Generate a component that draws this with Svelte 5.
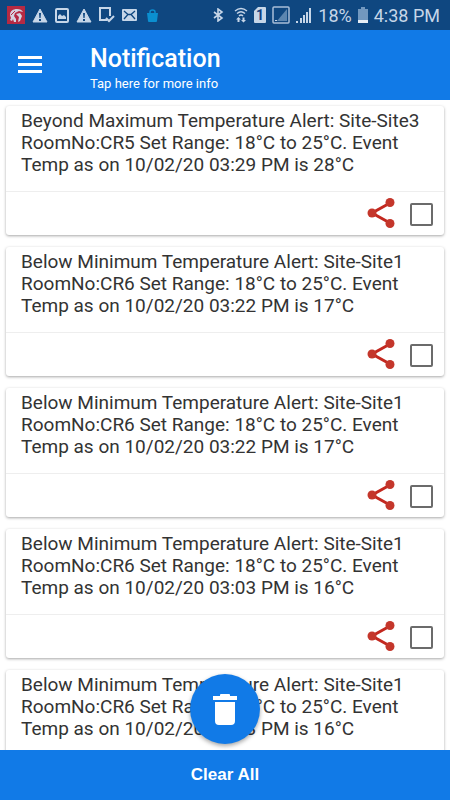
<script>
  let alerts = $state([
    { kind: "Beyond Maximum", site: "Site3", room: "CR5", time: "03:29", temp: 28, checked: false },
    { kind: "Below Minimum", site: "Site1", room: "CR6", time: "03:22", temp: 17, checked: false },
    { kind: "Below Minimum", site: "Site1", room: "CR6", time: "03:22", temp: 17, checked: false },
    { kind: "Below Minimum", site: "Site1", room: "CR6", time: "03:03", temp: 16, checked: false },
    { kind: "Below Minimum", site: "Site1", room: "CR6", time: "03:03", temp: 16, checked: false },
  ]);

  function clearAll() {
    alerts = [];
  }

  function deleteSelected() {
    alerts = alerts.filter((a) => !a.checked);
  }
</script>

{#snippet warning()}
  <svg width="16" height="15" viewBox="0 0 16 15">
    <path fill="#c6d6e8" stroke="#c6d6e8" stroke-linejoin="round" d="M8 1 15 14H1z" />
    <path fill="#0f4780" d="M7 5h2l-.4 5H7.400zM7 11h2v2H7z" />
  </svg>
{/snippet}

<div class="screen">
  <div class="status">
    <div class="tray">
      <svg width="18" height="18" viewBox="0 0 18 18">
        <path fill="#b52a43" d="M0 0h18v18H0z" />
        <path fill="#d5d3df" d="M3 9c0-4 3-6 7-6 3 0 5 1 6 3l-4-1-4 2-1 3 2 3v3H7l-1-3-1 2-2-1 1-2z" />
        <path fill="#d5d3df" d="M9 8l4-1 2 3-2 5-2 1 1-5z" />
        <path fill="none" stroke="#b52a43" d="M4 9l4-4" />
      </svg>
      {@render warning()}
      <svg width="14" height="15" viewBox="0 0 14 15">
        <rect x="1" y="1" width="12" height="13" rx="1" fill="none" stroke="#c6d6e8" stroke-width="2" />
        <path fill="#c6d6e8" d="M3 11V8l2-2 2 2 2-1 2 2v2z" />
      </svg>
      {@render warning()}
      <svg width="16" height="16" viewBox="0 0 16 16">
        <path fill="none" stroke="#c6d6e8" stroke-width="2" d="M11 9V1H1v12h7" />
        <path fill="none" stroke="#c6d6e8" stroke-width="2" d="M7 11l3 3 5-5" />
      </svg>
      <svg width="15" height="12" viewBox="0 0 15 12">
        <rect width="15" height="12" rx="1" fill="#c6d6e8" />
        <path fill="none" stroke="#0f4780" stroke-width="1.300" d="M2 2l4 3.500h3L13 2M2 10l3.500-4M13 10L9.500 6" />
      </svg>
      <svg class="bag" width="11" height="13" viewBox="0 0 11 13">
        <path fill="#0b8fd0" d="M0 4h11l-1 8q0 1-1 1H2q-1 0-1-1z" />
        <path fill="none" stroke="#0b8fd0" stroke-width="1.500" d="M3 5V3q0-2 2.500-2T8 3v2" />
      </svg>
    </div>
    <div class="system">
      <svg width="11" height="14" viewBox="0 0 11 14">
        <path fill="none" stroke="#c6d6e8" stroke-width="1.600" d="M1 4l8 6-4 3V1l4 3-8 6" />
      </svg>
      <svg class="wifi" width="14" height="16" viewBox="0 0 14 16">
        <g fill="none" stroke="#c6d6e8" stroke-width="1.400">
          <path d="M1 4q6-5 12 0M3 6.500q4-3.500 8 0M5 9q2-2 4 0" />
        </g>
        <path fill="#c6d6e8" d="M4.500 10L7 12.500H5.500V15h-2v-2.500H2zM9.500 15.500L7 13h1.500v-2.500h2V13H12z" />
      </svg>
      <svg class="sim" width="12" height="16" viewBox="0 0 12 16">
        <path fill="#c6d6e8" d="M4 0h7q1 0 1 1v14q0 1-1 1H1q-1 0-1-1V4z" />
        <text x="6" y="13" text-anchor="middle">1</text>
      </svg>
      <svg width="18" height="18" viewBox="0 0 18 18">
        <rect x="1" y="1" width="16" height="16" rx="1" fill="none" stroke="#a9bfd8" stroke-width="1.500" />
        <path fill="#5c86b0" d="M15 3v12H5z" />
        <path fill="#c6d6e8" d="M3 14h2v1H3z" />
      </svg>
      <svg width="16" height="16" viewBox="0 0 16 16">
        <path fill="#c6d6e8" d="M0 14h2v2H0zM4 11h2v5H4zM7 8h2v8H7zM10 5h2v11h-2zM13 1h2v15h-2z" />
      </svg>
      <span>18%</span>
      <svg width="10" height="16" viewBox="0 0 10 16">
        <path fill="#7298bf" d="M3 0h4v2h3v11H0V2h3z" />
        <path fill="#e8eef5" d="M0 13h10v3H0z" />
      </svg>
      <time>4:38 PM</time>
    </div>
  </div>

  <header>
    <button class="menu" aria-label="Open menu">
      <svg width="24" height="18" viewBox="0 0 24 18">
        <path fill="#fff" d="M0 0h24v3H0zM0 7h24v3H0zM0 14h24v3H0z" />
      </svg>
    </button>
    <div class="heading">
      <h1>Notification</h1>
      <a href="#info">Tap here for more info</a>
    </div>
  </header>

  <main>
    {#each alerts as alert}
      <article>
        <p>
          {alert.kind} Temperature Alert: Site-{alert.site} RoomNo:{alert.room} Set Range: 18°C to 25°C.
          Event Temp as on 10/02/20 {alert.time} PM is {alert.temp}°C
        </p>
        <div class="actions">
          <button class="share" aria-label="Share">
            <svg width="28" height="30" viewBox="0 0 28 30">
              <path fill="none" stroke="#c3281f" stroke-width="3" d="M23 5L5 15l18 10" />
              <g fill="#c4362b">
                <circle cx="5" cy="15" r="4.500" />
                <circle cx="23" cy="4.500" r="4.500" />
                <circle cx="23" cy="25.500" r="4.500" />
              </g>
            </svg>
          </button>
          <input type="checkbox" aria-label="Select alert" bind:checked={alert.checked} />
        </div>
      </article>
    {/each}
    <button class="fab" aria-label="Delete selected" onclick={deleteSelected}>
      <svg width="24" height="31" viewBox="0 0 24 31">
        <path fill="#fff" d="M7 2V1q0-1 1-1h8q1 0 1 1v1h7v4H0V2zM2 8h20v19q0 4-4 4H6q-4 0-4-4z" />
      </svg>
    </button>
  </main>

  <button class="clear" onclick={clearAll}>Clear All</button>
</div>

<style>
  :global(body) {
    margin: 0;
  }
  .screen {
    display: flex;
    flex-direction: column;
    height: 100vh;
    font-family: Roboto, sans-serif;
    background: #fff;
  }
  button {
    padding: 0;
    border: 0;
    background: none;
    cursor: pointer;
  }
  svg {
    display: block;
    flex: none;
  }
  .status {
    display: flex;
    justify-content: space-between;
    flex: none;
    height: 30px;
    padding: 0 10px 0 7px;
    background: #0f4780;
    color: #c6d6e8;
    font-size: 18px;
  }
  .tray,
  .system {
    display: flex;
    align-items: center;
    gap: 7px;
  }
  .bag {
    margin-left: 3px;
  }
  .system {
    gap: 6px;
    white-space: nowrap;
  }
  .wifi {
    margin-left: 4px;
  }
  .sim text {
    fill: #123f80;
    font-size: 14px;
    font-weight: 700;
  }
  header {
    display: flex;
    align-items: center;
    flex: none;
    height: 70px;
    padding: 0 18px;
    box-sizing: border-box;
    background: #117ae7;
    color: #fff;
  }
  .menu {
    width: 72px;
  }
  .heading {
    padding-top: 7px;
  }
  h1 {
    margin: 0;
    font-size: 25px;
    line-height: 30px;
    font-weight: 500;
  }
  header a {
    display: block;
    color: #fff;
    font-size: 13px;
    line-height: 20px;
    text-decoration: none;
  }
  main {
    position: relative;
    display: flex;
    flex-direction: column;
    gap: 12px;
    flex: 1;
    min-height: 0;
    padding: 6px 6px 0;
    overflow: hidden;
  }
  article {
    flex: none;
    border-radius: 3px;
    background: #fff;
    box-shadow: 0 1px 3px rgba(0, 0, 0, 0.35);
  }
  p {
    margin: 0;
    padding: 4px 15px 15px;
    color: #333;
    font-size: 19px;
    line-height: 22px;
  }
  .actions {
    display: flex;
    align-items: center;
    justify-content: flex-end;
    gap: 15px;
    height: 43px;
    padding-right: 11px;
    border-top: 1px solid #eee;
  }
  .share {
    margin-bottom: 2px;
  }
  input {
    appearance: none;
    width: 23px;
    height: 23px;
    margin: 2px 0 0;
    border: 2px solid #6b6b6b;
    border-radius: 2px;
  }
  input:checked {
    background: #117ae7;
  }
  .fab {
    position: absolute;
    left: 50%;
    bottom: 6px;
    display: flex;
    align-items: center;
    justify-content: center;
    width: 70px;
    height: 70px;
    margin-left: -35px;
    border-radius: 50%;
    background: #117ae7;
    box-shadow: 0 2px 4px rgba(0, 0, 0, 0.35);
  }
  .clear {
    flex: none;
    height: 50px;
    background: #117ae7;
    color: #fff;
    font-family: "Liberation Sans", Arial, sans-serif;
    font-size: 17px;
    font-weight: bold;
  }
</style>
